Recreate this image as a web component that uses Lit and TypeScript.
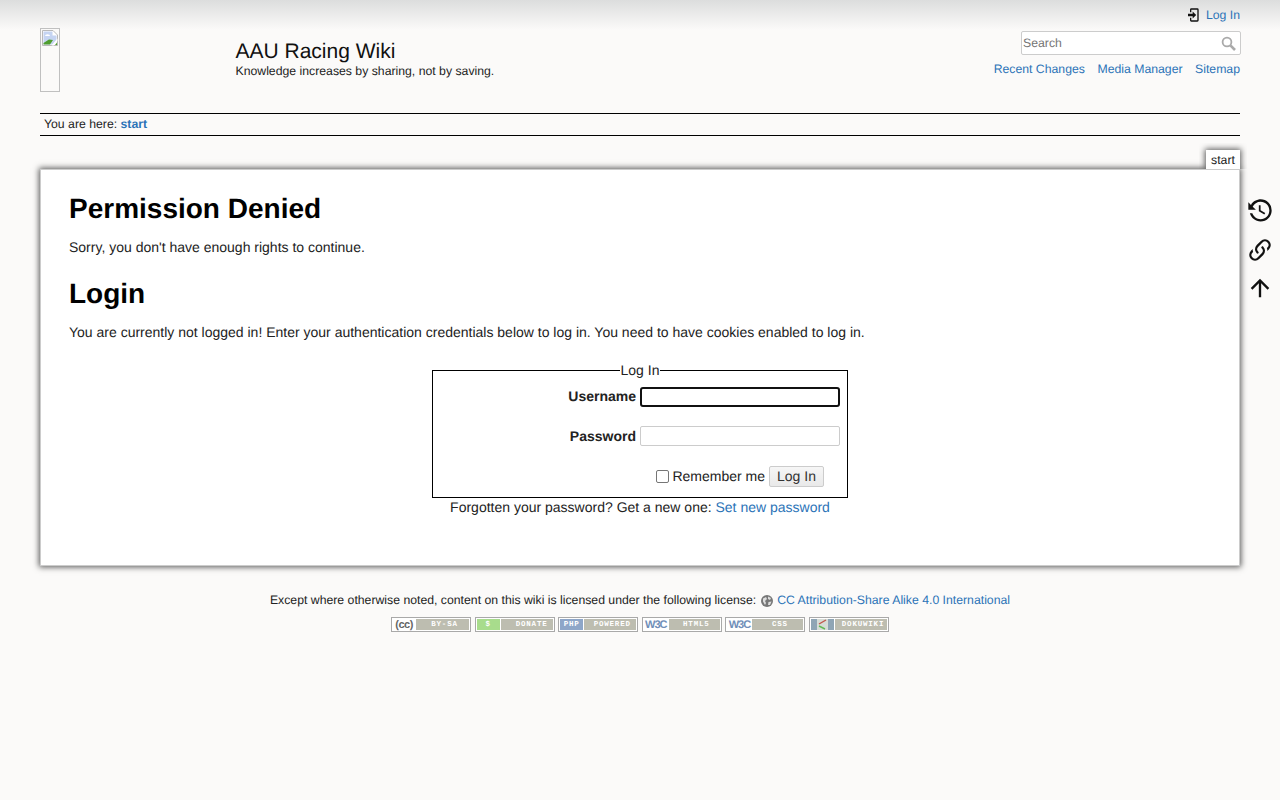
import { LitElement, html, css } from "lit";
import { customElement } from "lit/decorators.js";

const icon = (d: string, size = 24) =>
  html`<svg width=${size} height=${size} viewBox="0 0 24 24" aria-hidden="true"><path d=${d} fill="currentColor"></path></svg>`;

const LOGIN = "M10 17.25V14H3v-4h7V6.75L15.25 12 10 17.25M8 2h9a2 2 0 0 1 2 2v16a2 2 0 0 1-2 2H8a2 2 0 0 1-2-2v-4h2v4h9V4H8v4H6V4a2 2 0 0 1 2-2z";
const HISTORY = "M11 7v5.11l4.71 2.79.79-1.28-4-2.37V7m.5-5C8.97 2 5.91 3.92 4.27 6.77L2 4.5V11h6.5L5.75 8.25C6.96 5.73 9.5 4 12.5 4c4.14 0 7.5 3.36 7.5 7.5S16.64 19 12.5 19c-3.27 0-6.05-2.1-7.07-5H3.34c1.11 4.03 4.79 7 9.16 7 5.24 0 9.5-4.25 9.5-9.5A9.5 9.5 0 0 0 12.5 2z";
const LINK = "M10.59 13.41c.41.39.41 1.03 0 1.42-.39.39-1.03.39-1.42 0a5.003 5.003 0 0 1 0-7.07l3.54-3.54a5.003 5.003 0 0 1 7.07 0 5.003 5.003 0 0 1 0 7.07l-1.49 1.49c.01-.82-.12-1.64-.4-2.42l.47-.48a2.982 2.982 0 0 0 0-4.24 2.982 2.982 0 0 0-4.24 0l-3.53 3.53a2.982 2.982 0 0 0 0 4.24m2.82-4.24c.39-.39 1.03-.39 1.42 0a5.003 5.003 0 0 1 0 7.07l-3.54 3.54a5.003 5.003 0 0 1-7.07 0 5.003 5.003 0 0 1 0-7.07l1.49-1.49c-.01.82.12 1.64.4 2.43l-.47.47a2.982 2.982 0 0 0 0 4.24 2.982 2.982 0 0 0 4.24 0l3.53-3.53a2.982 2.982 0 0 0 0-4.24.973.973 0 0 1 0-1.42z";
const UP = "M13 20h-2V8l-5.5 5.5-1.42-1.42L12 4.16l7.92 7.92-1.42 1.42L13 8v12z";

const brokenImage = html`<svg class="broken-glyph" width="16" height="16" viewBox="0 0 16 16" aria-hidden="true">
  <path d="M0.5 0.5H11L15.5 5V15.5H0.5Z" fill="#fff" stroke="#b9b9b9"></path>
  <path d="M1.5 1.5H10.5V5.5H14.5V10L11 14.5H1.5Z" fill="#c5d4f2"></path>
  <path d="M3 6a2 1.5 0 0 1 5 0H3Z" fill="#fff"></path>
  <path d="M1.5 14.5V13L7 9.5 11 10 8 14.5Z" fill="#4f9d2f"></path>
  <path d="M9.5 15.5 15.5 8.5V11L12 15.5Z" fill="#fff"></path>
  <path d="M13 15 15 12.5V15Z" fill="#4f9d2f"></path>
</svg>`;

const ccLogo = html`<span class="cc">(cc)</span>`;
const w3c = html`<span class="w3c">W3C</span>`;
const dwLogo = html`<svg width="23" height="11" viewBox="0 0 23 11" aria-hidden="true">
  <rect width="23" height="11" fill="#8fa5b5"></rect>
  <rect x="6" y="0" width="11" height="11" fill="#d6dcd6"></rect>
  <path d="M8 5 15 1" stroke="#c0564a" stroke-width="1.4"></path>
  <path d="M8 7 14 10" stroke="#62b955" stroke-width="1.4"></path>
</svg>`;

@customElement("app-root")
export class AppRoot extends LitElement {
  static styles = css`
    :host {
      display: block;
      min-height: 800px;
      background: linear-gradient(#dcdddd 0, #fbfaf9 30px) no-repeat #fbfaf9;
      font-family: "Liberation Sans", Arial, sans-serif;
      font-size: 14px;
      line-height: 19.6px;
      color: #222;
      text-rendering: geometricPrecision;
    }
    * { box-sizing: border-box; }
    a { color: #2b73b7; text-decoration: none; }
    .site { padding: 0 40px; }

    .header { display: flex; justify-content: space-between; height: 113px; }
    .brand { display: flex; padding-top: 28px; gap: 175px; }
    .broken {
      width: 20px; height: 64px; border: 1px solid #c0c0c0;
      display: block; overflow: hidden; padding: 1px;
    }
    .broken-glyph { display: block; }
    .title { padding-top: 11px; margin-left: 0.5px; }
    .title h1 { margin: 0; font-size: 21px; line-height: 26px; font-weight: 400; color: #111; }
    .title p { margin: -1px 0 0; font-size: 12.25px; line-height: 14px; }

    .tools { display: flex; flex-direction: column; align-items: flex-end; font-size: 12.25px; }
    .login { display: flex; align-items: center; gap: 4px; height: 16px; margin-top: 7px; line-height: 16px; }
    .login svg { display: block; color: #111; }
    .search {
      display: flex; align-items: center; justify-content: space-between;
      width: 220px; height: 24px; margin: 8px -1px 0 0; padding: 0 4px 0 1px;
      background: #fff; border: 1px solid #ccc; border-radius: 2px;
      color: #757575; line-height: 22px; font-size: 12.25px;
    }
    .search svg { display: block; }
    .nav { display: flex; gap: 12.5px; margin-top: 6px; line-height: 16px; }

    .crumbs {
      border-top: 1px solid #000; border-bottom: 1px solid #000;
      height: 23px; padding: 0 4px; font-size: 12.25px; line-height: 21px;
    }
    .crumbs a { font-weight: 700; }

    .wrap { position: relative; margin-top: 33px; }
    .tab {
      position: absolute; right: 0; top: -19px;
      width: 34px; height: 20px; background: #fff; z-index: 2;
      font-size: 12.25px; line-height: 20px; text-align: center;
      box-shadow: 0 0 6px 1px #555;
      clip-path: inset(-7px -7px 1px -7px);
    }
    .side {
      position: absolute; left: 1206px; top: 28px;
      display: flex; flex-direction: column; gap: 10.5px; color: #111;
    }
    .side svg { display: block; }

    .page {
      background: #fff; height: 397px; padding: 24px 28px 0;
      border: 1px solid #ccc; box-shadow: 0 0 6px 1px #555;
    }
    h2 { margin: 0; font-size: 28px; line-height: 30px; font-weight: 700; color: #000; }
    .page p { margin: 0; }
    .lead { margin: 14px 0 21px !important; }
    .lead2 { margin: 14px 0 0 !important; }

    .form { display: flex; flex-direction: column; align-items: center; margin-top: 19px; }
    fieldset {
      width: 416px; height: 137px; margin: 0; padding: 0 7px;
      border: 1px solid #000;
    }
    legend { margin: 0 auto; padding: 0 1px; }
    .row { display: flex; justify-content: flex-end; align-items: center; gap: 4px; }
    .row label { font-weight: 700; position: relative; }
    .r2 label { top: 1px; }
    .field {
      width: 200px; height: 20px; background: #fff; border: 1px solid #ccc;
      border-radius: 2px;
    }
    .focused { border: 2px solid #111; border-radius: 3px; }
    .r1 { margin-top: 6px; }
    .r2 { margin-top: 19px; }
    .r3 { margin-top: 20px; padding-right: 16px; height: 21px; }
    .check {
      width: 13px; height: 13px; border: 1px solid #767676; border-radius: 2px; background: #fff;
    }
    .r3 .rem { font-weight: 400; top: 0.5px; display: flex; align-items: center; gap: 3.5px; }
    .btn {
      width: 55px; height: 21px; border: 1px solid #ccc; border-radius: 2px;
      background: linear-gradient(#f6f6f6, #e9e9e9); color: #333;
      text-align: center; line-height: 19px; font-size: 14px;
    }

    .footer { text-align: center; font-size: 12.25px; padding-top: 25px; }
    .license { display: flex; justify-content: center; align-items: center; gap: 3px; height: 20px; }
    .license svg { display: block; }
    .badges { display: flex; justify-content: center; gap: 3.6px; margin-top: 6px; }
    .badge {
      width: 80px; height: 15px; border: 1px solid #a9a9a9; background: #fff; padding: 1px;
      display: flex; gap: 1px; overflow: hidden;
    }
    .left {
      flex: none; height: 11px; display: flex; align-items: center; justify-content: center;
      font-family: "Liberation Mono", monospace; font-size: 7.5px; font-weight: 700; line-height: 12px; letter-spacing: 0.8px; color: #fff;
    }
    .right {
      flex: 1; height: 11px; background: #bdbdb0; color: #fff; white-space: nowrap;
      font-family: "Liberation Mono", monospace; font-size: 7.5px; font-weight: 700;
      line-height: 12px; letter-spacing: 0.8px; padding-left: 4px;
    }
    .right.wide { padding-left: 10px; }
    .cc { font-family: "Liberation Sans", sans-serif; font-weight: 700; font-size: 11px; letter-spacing: -0.5px; color: #666; }
    .w3c { font-family: "Liberation Sans", sans-serif; font-size: 11px; letter-spacing: -1px; color: #6f8eb8; }
  `;

  private badge(leftWidth: number, left: unknown, leftBg: string, text: string, wide = false) {
    return html`<span class="badge">
      <span class="left" style="width:${leftWidth}px;background:${leftBg}">${left}</span>
      <span class="right ${wide ? "wide" : ""}">${text}</span>
    </span>`;
  }

  render() {
    return html`<div class="site">
      <header class="header">
        <div class="brand">
          <span class="broken">${brokenImage}</span>
          <div class="title">
            <h1>AAU Racing Wiki</h1>
            <p>Knowledge increases by sharing, not by saving.</p>
          </div>
        </div>
        <div class="tools">
          <div class="login">${icon(LOGIN, 16)}<a href="#">Log In</a></div>
          <div class="search">
            <span>Search</span>
            <svg width="15" height="15" viewBox="0 0 15 15" aria-hidden="true">
              <circle cx="6" cy="6" r="4.4" fill="none" stroke="#aaa" stroke-width="1.8"></circle>
              <path d="M9.4 9.4 14 14" stroke="#aaa" stroke-width="2.6"></path>
            </svg>
          </div>
          <nav class="nav">
            <a href="#">Recent Changes</a><a href="#">Media Manager</a><a href="#">Sitemap</a>
          </nav>
        </div>
      </header>

      <div class="crumbs">You are here: <a href="#">start</a></div>

      <div class="wrap">
        <div class="tab">start</div>
        <div class="side">${icon(HISTORY, 28)}${icon(LINK, 28)}${icon(UP, 28)}</div>
        <main class="page">
          <h2>Permission Denied</h2>
          <p class="lead">Sorry, you don't have enough rights to continue.</p>
          <h2>Login</h2>
          <p class="lead2">You are currently not logged in! Enter your authentication credentials below to log in. You need to have cookies enabled to log in.</p>
          <div class="form">
            <fieldset>
              <legend>Log In</legend>
              <div class="row r1"><label>Username</label><div class="field focused"></div></div>
              <div class="row r2"><label>Password</label><div class="field"></div></div>
              <div class="row r3">
                <label class="rem"><span class="check"></span>Remember me</label>
                <div class="btn">Log In</div>
              </div>
            </fieldset>
            <p>Forgotten your password? Get a new one: <a href="#">Set new password</a></p>
          </div>
        </main>
      </div>

      <footer class="footer">
        <div class="license">
          <span>Except where otherwise noted, content on this wiki is licensed under the following license:</span>
          <svg width="14" height="14" viewBox="0 0 14 14" aria-hidden="true" style="margin-left:1px">
            <circle cx="7" cy="7" r="6" fill="#777"></circle>
            <path d="M3 4.5 6 3 7 5 5 7 6 9 5 11 3 7.5ZM8 2.5 11 4 10 6 8 5ZM8.5 8 11.5 7.5 10 11 8 11Z" fill="#ddd"></path>
          </svg>
          <a href="#">CC Attribution-Share Alike 4.0 International</a>
        </div>
        <div class="badges">
          ${this.badge(22, ccLogo, "#fff", "BY-SA")}
          ${this.badge(23, "$", "#a8dc8c", "DONATE", true)}
          ${this.badge(23, "PHP", "#8ea6c8", "POWERED")}
          ${this.badge(24, w3c, "#fff", "HTML5")}
          ${this.badge(24, w3c, "#fff", "CSS")}
          ${this.badge(23, dwLogo, "#8fa5b5", "DOKUWIKI")}
        </div>
      </footer>
    </div>`;
  }
}
